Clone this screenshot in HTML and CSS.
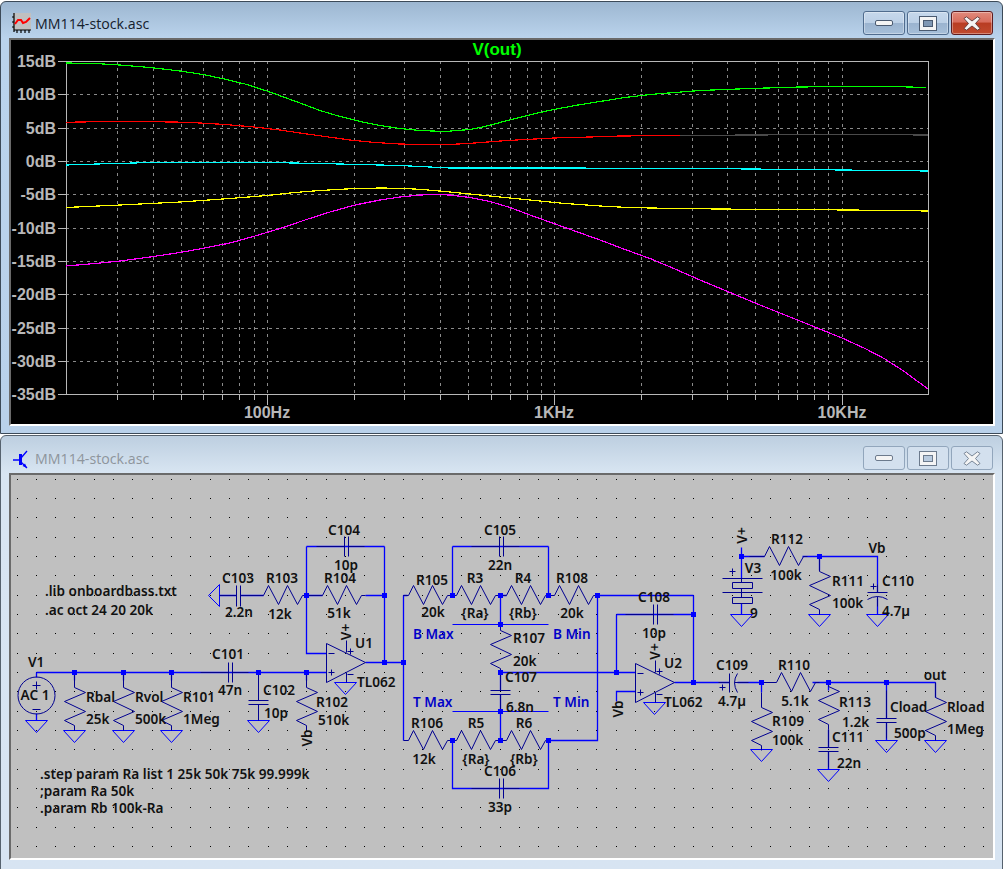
FILE: index.html
```html
<!DOCTYPE html>
<html lang="en">
<head>
<meta charset="utf-8">
<title>MM114-stock.asc</title>
<link rel="stylesheet" href="styles.css">
</head>
<body>
<div class="desktop">

<section class="window window-active">
  <header class="titlebar">
    <svg class="app-icon" viewBox="0 0 19 20" width="19" height="20">
      <rect x="1" y="0" width="18" height="17" fill="#c0c0c0"/>
      <path d="M2 0V19M0 4H2M0 9H2M0 14H2M2 17H19M5 17V20M9 17V20M13 17V20M17 17V20" stroke="#000" stroke-width="1.2" fill="none"/>
      <path d="M3 11L6 7L9 7L11 10L14 9L18 5" stroke="#f00" stroke-width="2" fill="none"/>
    </svg>
    <span class="title">MM114-stock.asc</span>
    <div class="controls">
      <button class="ctl" type="button"><svg viewBox="0 0 18 6" width="18" height="6"><rect x=".5" y=".5" width="17" height="5" rx="1.5" fill="#f4f4f4" stroke="#4a5a70"/></svg></button>
      <button class="ctl" type="button"><svg viewBox="0 0 18 15" width="18" height="15"><rect x="2.5" y="2.5" width="13" height="10" fill="#7f97b3" stroke="#f4f4f4" stroke-width="4"/><rect x=".5" y=".5" width="17" height="14" fill="none" stroke="#4a5a70"/><rect x="4.5" y="4.5" width="9" height="6" fill="none" stroke="#4a5a70"/></svg></button>
      <button class="ctl ctl-close" type="button"><svg viewBox="0 0 18 15" width="18" height="15"><path d="M1 2.5L3.5 .8L9 5L14.5 .8L17 2.5L12.5 7.5L17 12.5L14.5 14.2L9 10L3.5 14.2L1 12.5L5.5 7.5Z" fill="#f4f4f4" stroke="#5c3a3a" stroke-width=".9"/></svg></button>
    </div>
  </header>
  <div class="client">
    <svg class="canvas" width="982" height="384" viewBox="11 40 982 384">
      <g class="plot-grid">
        <path d="M117.5 61V395M153.5 61V395M181.5 61V395M203.5 61V395M222.5 61V395M239.5 61V395M254.5 61V395M267.5 61V395M354.5 61V395M404.5 61V395M440.5 61V395M468.5 61V395M491.5 61V395M510.5 61V395M527.5 61V395M541.5 61V395M554.5 61V395M641.5 61V395M692.5 61V395M727.5 61V395M755.5 61V395M778.5 61V395M797.5 61V395M814.5 61V395M828.5 61V395M842.5 61V395"/>
        <path d="M66 94.5H928M66 128.5H928M66 161.5H928M66 194.5H928M66 228.5H928M66 261.5H928M66 294.5H928M66 328.5H928M66 361.5H928"/>
      </g>
      <g class="plot-axis">
        <rect x="66.5" y="61.5" width="862" height="333"/>
        <path d="M58 61.5H66M58 94.5H66M58 128.5H66M58 161.5H66M58 194.5H66M58 228.5H66M58 261.5H66M58 294.5H66M58 328.5H66M58 361.5H66M58 394.5H66"/>
        <path d="M117.5 395V400M153.5 395V400M181.5 395V400M203.5 395V400M222.5 395V400M239.5 395V400M254.5 395V400M267.5 395V405M354.5 395V400M404.5 395V400M440.5 395V400M468.5 395V400M491.5 395V400M510.5 395V400M527.5 395V400M541.5 395V400M554.5 395V405M641.5 395V400M692.5 395V400M727.5 395V400M755.5 395V400M778.5 395V400M797.5 395V400M814.5 395V400M828.5 395V400M842.5 395V405"/>
      </g>
      <g class="trace-set">
        <polyline class="trace-red" points="66,122.5 78,122 120,121.5 175,122 200,123 225,124.5 254,127 280,130 300,133 325,136.5 350,140 375,142.5 400,144 425,144.5 450,144.5 475,143 500,141 525,139.5 554,138 590,137 620,136 680,135.5"/>
        <polyline class="trace-dim" points="680,135.5 750,135 850,134.5 928,135"/>
        <polyline class="trace-cyan" points="66,165 97,164 152,162.5 267,162.5 320,163.5 400,165.5 450,168 554,168 700,168.5 800,169.5 928,171"/>
        <polyline class="trace-yellow" points="66,207.5 120,205 180,202 230,198.5 267,195.5 295,192.5 320,190.5 350,188.8 380,188 400,188.3 420,189.3 445,191.5 470,194 500,197 530,200 565,203.5 600,206 625,207.3 650,208 700,208.8 750,209.3 850,210 928,211"/>
        <polyline class="trace-magenta" points="66,266 95,263.5 120,261 150,257 180,252.5 205,248 230,243 255,236 280,228.5 305,220 330,212 355,205 380,200 400,197 420,195 435,194.5 450,195 470,197.5 490,201.5 510,207.5 530,215 565,227.5 600,240 625,249.5 650,258.5 675,269 700,280 730,292.5 760,305 800,321 842,338 865,348.5 885,359 905,372 928,389"/>
        <polyline class="trace-green" points="66,63 95,63.5 120,65 150,67.5 180,71 203,74.5 222,78.5 245,84 267,91 285,97.5 300,103 320,110.5 340,116.5 360,121.5 380,125.5 400,128.5 420,130.5 445,131.5 470,129.5 485,126.5 500,122.5 520,117.5 540,112.5 554,109.5 575,105.5 600,101.5 625,97.5 650,94.5 675,92.5 700,90.5 725,89.5 750,88.5 800,87 842,86.5 893,86.5 926,87.5"/>
      </g>
      <g class="plot-label">
        <text class="plot-title" x="497" y="55">V(out)</text>
        <text class="end" x="56" y="67">15dB</text>
        <text class="end" x="56" y="100">10dB</text>
        <text class="end" x="56" y="134">5dB</text>
        <text class="end" x="56" y="167">0dB</text>
        <text class="end" x="56" y="200">-5dB</text>
        <text class="end" x="56" y="234">-10dB</text>
        <text class="end" x="56" y="267">-15dB</text>
        <text class="end" x="56" y="300">-20dB</text>
        <text class="end" x="56" y="334">-25dB</text>
        <text class="end" x="56" y="367">-30dB</text>
        <text class="end" x="56" y="400">-35dB</text>
        <text class="mid" x="267" y="418">100Hz</text>
        <text class="mid" x="554" y="418">1KHz</text>
        <text class="mid" x="842" y="418">10KHz</text>
      </g>
    </svg>
  </div>
</section>

<section class="window window-inactive">
  <header class="titlebar">
    <svg class="app-icon" viewBox="0 0 19 20" width="19" height="20">
      <path d="M1 11H8" stroke="#00f" stroke-width="1.5" fill="none"/>
      <path d="M8.5 5V16" stroke="#00f" stroke-width="3" fill="none"/>
      <path d="M9 9L15 2M9 13L15 19" stroke="#00f" stroke-width="1.3" fill="none"/>
      <path d="M15 19L10.5 17L13 14.5Z" fill="#00f"/>
    </svg>
    <span class="title">MM114-stock.asc</span>
    <div class="controls">
      <button class="ctl" type="button"><svg viewBox="0 0 18 6" width="18" height="6"><rect x=".5" y=".5" width="17" height="5" rx="1.5" fill="#f4f4f4" stroke="#6c7a8c"/></svg></button>
      <button class="ctl" type="button"><svg viewBox="0 0 18 15" width="18" height="15"><rect x="2.5" y="2.5" width="13" height="10" fill="#b9cbdf" stroke="#f4f4f4" stroke-width="4"/><rect x=".5" y=".5" width="17" height="14" fill="none" stroke="#6c7a8c"/><rect x="4.5" y="4.5" width="9" height="6" fill="none" stroke="#6c7a8c"/></svg></button>
      <button class="ctl" type="button"><svg viewBox="0 0 18 15" width="18" height="15"><path d="M1 2.5L3.5 .8L9 5L14.5 .8L17 2.5L12.5 7.5L17 12.5L14.5 14.2L9 10L3.5 14.2L1 12.5L5.5 7.5Z" fill="#f4f4f4" stroke="#6c7a8c" stroke-width=".9"/></svg></button>
    </div>
  </header>
  <div class="client client-schematic">
    <svg class="canvas" width="982" height="383" viewBox="11 475 982 383">
      <defs>
        <path id="rv" d="M0 0V15L11 20L-10 29L11 39L-10 48L0 53V58"/>
        <path id="rvs" d="M0 10V15L11 20L-10 29L11 39L-10 48L0 53V58"/>
        <path id="rh" d="M0 0H15L20 -10L30 9L39 -10L49 9L54 0H58"/>
        <path id="rhs" d="M10 0H15L20 -10L30 9L39 -10L49 9L54 0H58"/>
        <path id="cv" d="M0 0V28M-10 28H10M-10 32H10M0 32V48"/>
        <path id="cvs" d="M0 10V28M-10 28H10M-10 32H10M0 32V48"/>
        <path id="ch" d="M0 0H28M28 -10V10M32 -10V10M32 0H48"/>
        <path id="gnd" d="M-11 0H11L0 12Z"/>
        <rect id="node" x="-2.5" y="-2.5" width="5" height="5"/>
        <path id="opamp" d="M0 -19V20L39 0ZM2 -9H8M2 10H8M5 7V13M20 -10V-22M21 -11H27M24 -14V-8M20 10V20M21 12H27"/>
      </defs>
      <g class="dots">
        <path d="M16.5 479.5H990M16.5 498.5H990M16.5 517.5H990M16.5 537.5H990M16.5 556.5H990M16.5 575.5H990M16.5 595.5H990M16.5 614.5H990M16.5 633.5H990M16.5 653.5H990M16.5 672.5H990M16.5 691.5H990M16.5 711.5H990M16.5 730.5H990M16.5 749.5H990M16.5 769.5H990M16.5 788.5H990M16.5 807.5H990M16.5 827.5H990M16.5 846.5H990"/>
      </g>
      <g class="schematic">
        <path class="wire" d="M36 672H326M36 672V677M36 713V720M74 672V680M123 672V680M171 672V680M306 672V680M219 595H236M240 595H263M306 595H322M306 546H384M306 546V653H326M384 546V662M365 595H384M365 662H403M403 595V740M403 595H407M452 546V595M452 546H548M548 546V595M498 595H506M500 595V624M500 672V690M500 694V711M500 711V740M500 672H635M597 595H693M597 595V740H548M616 614H693M616 614V672M693 595V682M674 682H729M737 682H761M635 691H616V701M812 682H935M761 682V692M828 682V690M886 682V718M935 682V697M828 729V747M828 751V769M886 722V740M741 547V578M741 556H764M802 556H877V592M877 598V614M819 556V570M452 740V788H548V740M741 603V614"/>
        <path class="wire-thin" d="M452 624H548M452 711H548"/>
        <g class="gnds">
          <use href="#gnd" x="36" y="720"/>
          <use href="#gnd" x="74" y="730"/>
          <use href="#gnd" x="123" y="730"/>
          <use href="#gnd" x="171" y="730"/>
          <use href="#gnd" x="258" y="720"/>
          <use href="#gnd" x="345" y="682"/>
          <use href="#gnd" x="654" y="702"/>
          <use href="#gnd" x="741" y="614"/>
          <use href="#gnd" x="819" y="614"/>
          <use href="#gnd" x="877" y="614"/>
          <use href="#gnd" x="761" y="749"/>
          <use href="#gnd" x="828" y="769"/>
          <use href="#gnd" x="886" y="740"/>
          <use href="#gnd" x="935" y="740"/>
          <path d="M219 584V606L208 595Z"/>
        </g>
        <g class="symbols">
          <circle cx="36" cy="695" r="18.5"/>
          <path d="M32 685H40M36 681V689M32 709H40"/>
          <use href="#rv" x="74" y="672"/>
          <use href="#rv" x="123" y="672"/>
          <use href="#rv" x="171" y="672"/>
          <use href="#rv" x="306" y="672"/>
          <use href="#rvs" x="500" y="615"/>
          <use href="#rv" x="761" y="692"/>
          <use href="#rvs" x="828" y="671"/>
          <use href="#rv" x="935" y="682"/>
          <use href="#rv" x="819" y="556"/>
          <use href="#rh" x="248" y="595"/>
          <use href="#rh" x="307" y="595"/>
          <use href="#rhs" x="393" y="595"/>
          <use href="#rhs" x="441" y="595"/>
          <use href="#rhs" x="491" y="595"/>
          <use href="#rhs" x="539" y="595"/>
          <use href="#rhs" x="393" y="740"/>
          <use href="#rhs" x="441" y="740"/>
          <use href="#rhs" x="491" y="740"/>
          <use href="#rh" x="749" y="556"/>
          <use href="#rh" x="761" y="682"/>
          <use href="#ch" x="200" y="672"/>
          <use href="#ch" x="316" y="546"/>
          <use href="#ch" x="471" y="546"/>
          <use href="#ch" x="471" y="788"/>
          <use href="#ch" x="625" y="614"/>
          <use href="#cv" x="258" y="672"/>
          <use href="#cvs" x="500" y="662"/>
          <use href="#cvs" x="828" y="719"/>
          <use href="#cv" x="886" y="690"/>
          <path d="M219 595H236M236 585V606M240 585V606M240 595H256"/>
          <path d="M729 673V692M737 673Q731 682 737 692M729 682H718M734 682H748M719 687H725M722 684V690"/>
          <path d="M867 592H887M867 599Q877 593 887 599M877 592V584M877 596V606M870 586H876M873 583V589"/>
          <path d="M741 578V582M722 578H762M732 582H752V588H732ZM741 588V592M722 592H762M732 597H752V603H732ZM741 592V597M729 571H735M732 568V574"/>
          <use href="#opamp" x="326" y="662"/>
          <use href="#opamp" x="635" y="682"/>
        </g>
        <g class="nodes">
          <use href="#node" x="74" y="672"/><use href="#node" x="123" y="672"/><use href="#node" x="171" y="672"/><use href="#node" x="258" y="672"/><use href="#node" x="306" y="672"/>
          <use href="#node" x="306" y="595"/><use href="#node" x="384" y="595"/><use href="#node" x="384" y="662"/><use href="#node" x="403" y="662"/>
          <use href="#node" x="452" y="595"/><use href="#node" x="500" y="595"/><use href="#node" x="548" y="595"/><use href="#node" x="597" y="595"/>
          <use href="#node" x="500" y="624"/><use href="#node" x="500" y="672"/><use href="#node" x="616" y="672"/><use href="#node" x="693" y="614"/><use href="#node" x="693" y="682"/>
          <use href="#node" x="761" y="682"/><use href="#node" x="828" y="682"/><use href="#node" x="886" y="682"/><use href="#node" x="741" y="556"/><use href="#node" x="819" y="556"/>
          <use href="#node" x="452" y="740"/><use href="#node" x="500" y="711"/><use href="#node" x="500" y="740"/><use href="#node" x="548" y="740"/>
        </g>
      </g>
      <g class="labels">
        <text x="28" y="662">V1</text>
        <text class="mid" x="35" y="695">AC 1</text>
        <text x="86" y="697">Rbal</text><text x="86" y="719">25k</text>
        <text x="135" y="697">Rvol</text><text x="135" y="719">500k</text>
        <text x="183" y="697">R101</text><text x="183" y="719">1Meg</text>
        <text class="mid" x="228" y="654">C101</text><text class="mid" x="230" y="690">47n</text>
        <text x="263" y="690">C102</text><text x="264" y="713">10p</text>
        <text class="mid" x="238" y="578">C103</text><text class="mid" x="239" y="612">2.2n</text>
        <text class="mid" x="282" y="578">R103</text><text class="mid" x="280" y="614">12k</text>
        <text class="mid" x="340" y="578">R104</text><text class="mid" x="339" y="613">51k</text>
        <text class="mid" x="344" y="530">C104</text><text class="mid" x="346" y="565">10p</text>
        <text x="355" y="643">U1</text><text x="357" y="682">TL062</text>
        <text x="316" y="702">R102</text><text x="318" y="720">510k</text>
        <text class="mid" transform="rotate(-90 345 633)" x="345" y="633">V+</text>
        <text class="mid" transform="rotate(-90 306 739)" x="306" y="739">Vb</text>
        <text class="mid" x="500" y="530">C105</text><text class="mid" x="500" y="565">22n</text>
        <text class="mid" x="432" y="580">R105</text><text class="mid" x="433" y="612">20k</text>
        <text class="mid" x="475" y="578">R3</text><text class="mid" x="475" y="613">{Ra}</text>
        <text class="mid" x="523" y="578">R4</text><text class="mid" x="523" y="613">{Rb}</text>
        <text class="mid" x="572" y="578">R108</text><text class="mid" x="572" y="613">20k</text>
        <text class="net" x="413" y="634">B Max</text><text class="net" x="553" y="634">B Min</text>
        <text x="513" y="638">R107</text><text x="513" y="661">20k</text>
        <text x="505" y="677">C107</text><text x="506" y="707">6.8n</text>
        <text class="net" x="413" y="702">T Max</text><text class="net" x="553" y="702">T Min</text>
        <text class="mid" x="427" y="723">R106</text><text class="mid" x="424" y="759">12k</text>
        <text class="mid" x="476" y="723">R5</text><text class="mid" x="476" y="759">{Ra}</text>
        <text class="mid" x="524" y="723">R6</text><text class="mid" x="524" y="759">{Rb}</text>
        <text class="mid" x="500" y="771">C106</text><text class="mid" x="500" y="807">33p</text>
        <text class="mid" x="654" y="597">C108</text><text class="mid" x="654" y="633">10p</text>
        <text x="664" y="663">U2</text><text x="664" y="702">TL062</text>
        <text class="mid" transform="rotate(-90 654 652.5)" x="654" y="652.5">V+</text>
        <text class="mid" transform="rotate(-90 617 710)" x="617" y="710">Vb</text>
        <text class="mid" x="732" y="665">C109</text><text class="mid" x="732" y="701">4.7µ</text>
        <text class="mid" x="794" y="665">R110</text><text class="mid" x="795" y="701">5.1k</text>
        <text x="772" y="721">R109</text><text x="772" y="740">100k</text>
        <text x="839" y="702">R113</text><text x="842" y="722">1.2k</text>
        <text x="832" y="737">C111</text><text x="837" y="763">22n</text>
        <text x="890" y="707">Cload</text><text x="894" y="733">500p</text>
        <text class="mid" x="935" y="675">out</text>
        <text x="947" y="707">Rload</text><text x="947" y="729">1Meg</text>
        <text class="mid" transform="rotate(-90 741 536.5)" x="741" y="536.5">V+</text>
        <text class="mid" x="787" y="539">R112</text><text class="mid" x="786" y="575">100k</text>
        <text class="mid" x="753" y="568">V3</text><text class="mid" x="754" y="613">9</text>
        <text x="832" y="581">R111</text><text x="832" y="603">100k</text>
        <text class="mid" x="877" y="548">Vb</text>
        <text x="882" y="581">C110</text><text x="882" y="611">4.7µ</text>
        <text x="45" y="591">.lib onboardbass.txt</text>
        <text x="45" y="610">.ac oct 24 20 20k</text>
        <text x="40" y="774">.step param Ra list 1 25k 50k 75k 99.999k</text>
        <text x="40" y="791">;param Ra 50k</text>
        <text x="40" y="808">.param Rb 100k-Ra</text>
      </g>
    </svg>
  </div>
</section>

</div>
</body>
</html>
```

FILE: styles.css
```css
* { box-sizing: border-box; }

html, body {
  margin: 0;
  height: 100%;
  background: #fff;
  overflow: hidden;
}

.desktop {
  display: flex;
  flex-direction: column;
  width: 1005px;
  height: 869px;
  padding-top: 1px;
  gap: 1px;
  overflow: hidden;
}

.window {
  flex: none;
  width: 1003px;
  border: 1px solid #3c4a58;
  border-radius: 6px 6px 0 0;
  padding: 0 7px 7px 8px;
}

.window-active {
  height: 433px;
  background: linear-gradient(180deg, #9db7d1 0, #bad3ec 36px, #b9d1ea 100%);
}

.window-inactive {
  height: 440px;
  background: linear-gradient(180deg, #bdcfe0 0, #d8e5f2 37px, #d7e4f2 100%);
  border-color: #56626e;
}

.titlebar {
  display: flex;
  align-items: center;
  height: 36px;
  padding: 6px 2px 0 3px;
}

.window-inactive .titlebar {
  height: 37px;
  padding-top: 8px;
}

.app-icon {
  flex: none;
  margin-right: 4px;
}

.title {
  font: 14.2px "Open Sans", "Noto Sans", sans-serif;
  color: #14202c;
}

.window-inactive .title { color: #8e959c; }

.controls {
  display: flex;
  gap: 2px;
  align-self: flex-start;
  margin-top: 3px;
  margin-left: auto;
}

.ctl {
  display: flex;
  align-items: center;
  justify-content: center;
  width: 42px;
  height: 24px;
  padding: 0;
  border: 1px solid #506c8e;
  border-radius: 3px;
  background: linear-gradient(180deg, #c6d8ec 0, #bcd0e6 48%, #9ab3cf 50%, #a6bfd9 100%);
  box-shadow: inset 0 0 0 1px rgba(255, 255, 255, .35);
}

.ctl-close {
  border-color: #5e1c20;
  background: linear-gradient(180deg, #e08a7c 0, #d86c5c 46%, #b83c22 50%, #c04a2e 100%);
}

.window-inactive .controls { margin-top: 2px; }

.window-inactive .ctl {
  border-color: #92a6bc;
  background: #d3e0ee;
  box-shadow: none;
}

.client {
  border: 2px solid;
  border-color: #6a6a6a #fff #fff #6a6a6a;
  background: #000;
  width: 986px;
  height: 388px;
}

.client-schematic {
  background: #c0c0c0;
  height: 387px;
}

.canvas { display: block; }

/* waveform plot */
.plot-grid path {
  fill: none;
  stroke: #8a8a8a;
  stroke-width: 1;
  stroke-dasharray: 3 4;
  shape-rendering: crispEdges;
}

.plot-axis rect,
.plot-axis path {
  fill: none;
  stroke: #b8b8b8;
  stroke-width: 1;
  shape-rendering: crispEdges;
}

.trace-set polyline {
  fill: none;
  stroke-width: 1.2;
  shape-rendering: crispEdges;
}

.trace-green { stroke: #0f0; }
.trace-red { stroke: #f00; }
.trace-dim { stroke: #4a4a4a; }
.trace-cyan { stroke: #0ff; }
.trace-yellow { stroke: #ff0; }
.trace-magenta { stroke: #f0f; }

.plot-label text {
  font: bold 16px "Liberation Sans", Arial, sans-serif;
  fill: #b8b8b8;
}

.plot-label .plot-title {
  font-size: 17px;
  fill: #0f0;
  text-anchor: middle;
}

.plot-label .end { text-anchor: end; }
.plot-label .mid { text-anchor: middle; }

/* schematic */
.dots path {
  fill: none;
  stroke: #000;
  stroke-width: 1;
  stroke-dasharray: 1 18.3333;
  shape-rendering: crispEdges;
}

.schematic { transform: translate(.5px, .5px); }

.wire {
  fill: none;
  stroke: #00f;
  stroke-width: 1.3;
}

.wire-thin {
  fill: none;
  stroke: #00f;
  stroke-width: 1.2;
}

.gnds use,
.gnds path {
  fill: none;
  stroke: #00f;
  stroke-width: 1;
}

.symbols path,
.symbols circle,
.symbols use {
  fill: none;
  stroke: #000090;
  stroke-width: 1;
}

.nodes use { fill: #00f; }

.labels { transform: translateY(-1px); }

.labels text {
  font: 600 13.6px "Noto Sans", "Open Sans", sans-serif;
  fill: #111;
  dominant-baseline: central;
}

.labels .mid { text-anchor: middle; }

.labels .net { fill: #0000c8; }
```
